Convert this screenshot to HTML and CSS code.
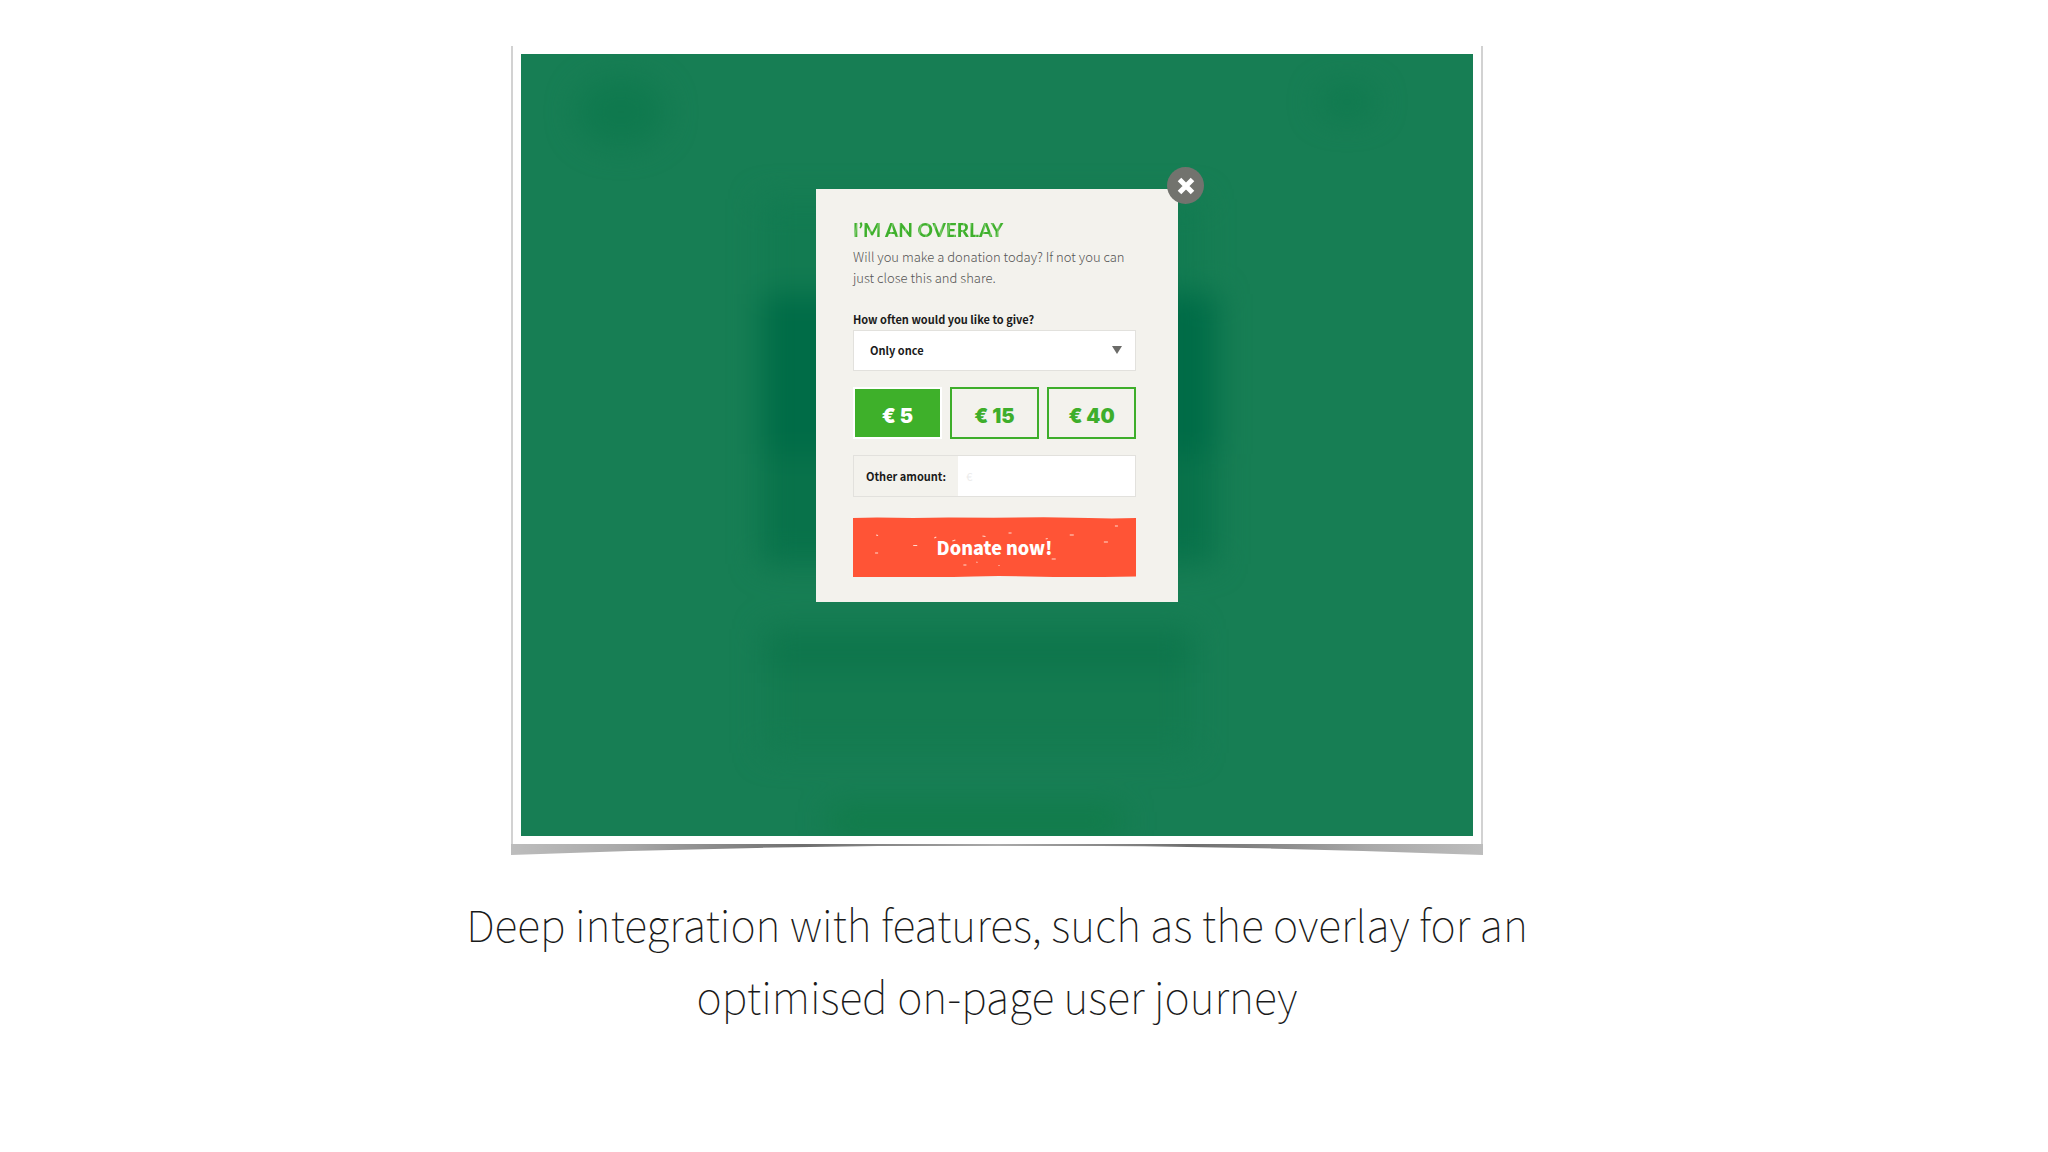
FILE: index.html
```
<!DOCTYPE html>
<html lang="en">
<head>
  <meta charset="UTF-8" />
  <meta name="viewport" content="width=device-width, initial-scale=1.0" />
  <title>Donation Overlay</title>
  <link rel="stylesheet" href="styles.css">
</head>
<body>
  <main class="slide">
    <figure class="figure">
      <div class="frame">
        <div class="stage">
          <!-- blurred page behind the overlay -->
          <svg class="backdrop" viewBox="0 0 952 782" preserveAspectRatio="none" aria-hidden="true">
            <defs>
              <filter id="soft" x="-30%" y="-30%" width="160%" height="160%" color-interpolation-filters="sRGB">
                <feGaussianBlur stdDeviation="15" />
              </filter>
            </defs>
            <g filter="url(#soft)">
              <ellipse cx="100" cy="58" rx="44" ry="34" fill="#0f794e" />
              <ellipse cx="826" cy="48" rx="28" ry="16" fill="#0f794e" />
              <rect x="240" y="145" width="440" height="110" fill="#127b51" />
              <rect x="240" y="240" width="456" height="160" fill="#006c47" />
              <rect x="240" y="400" width="454" height="110" fill="#08724a" />
              <rect x="244" y="575" width="428" height="44" fill="#0e764c" />
              <rect x="244" y="619" width="428" height="80" fill="#147b50" />
              <rect x="310" y="755" width="290" height="24" fill="#0f7b47" />
            </g>
          </svg>

          <section class="modal" aria-labelledby="modalTitle">
            <button class="close" type="button" aria-label="Close">
              <svg viewBox="0 0 18 18" aria-hidden="true">
                <path d="M2.500 2.500 15.500 15.500M15.500 2.500 2.500 15.500" />
              </svg>
            </button>

            <h1 id="modalTitle">I’M AN OVERLAY</h1>
            <p class="intro">Will you make a donation today? If not you can just close this and share.</p>

            <form class="form">
              <label class="field-label" for="frequency">How often would you like to give?</label>
              <div class="select-wrap">
                <select id="frequency">
                  <option>Only once</option>
                  <option>Monthly</option>
                </select>
                <svg class="arrow" viewBox="0 0 10 8" aria-hidden="true"><path d="M0 0h10L5 8z" /></svg>
              </div>

              <div class="amounts">
                <button class="amount active" type="button">€ 5</button>
                <button class="amount" type="button">€ 15</button>
                <button class="amount" type="button">€ 40</button>
              </div>

              <div class="other">
                <label for="other">Other amount:</label>
                <input type="text" id="other" placeholder="€" />
              </div>

              <button class="donate" type="submit">
                <svg class="paint" viewBox="0 0 282 60" preserveAspectRatio="none" aria-hidden="true">
                  <path class="fill" d="M0 1 24 .5 60 1 95 .5 140 .8 190 .3 235 1 258 1.500 282 1V59.500L250 60 200 60 145 59 120 59.500 100 60 0 60z" />
                  <path class="specks" d="M23 18l2 .5M60 28.500h4M22 36h3M81 21l2-1M99 24l3-1M129 19l3 .5M155 16h3M216 18h4M250 25h4M261 9h3M198 42h4M110 48h3M123 45l1 .5M145 48.500h1M192 22l2-.5" />
                </svg>
                <span>Donate now!</span>
              </button>
            </form>
          </section>
        </div>
      </div>

      <svg class="curl" viewBox="0 0 972 14" preserveAspectRatio="none" aria-hidden="true">
        <defs>
          <linearGradient id="curlFill">
            <stop offset="0" stop-color="#bdbdbd" />
            <stop offset=".12" stop-color="#a8a8a8" />
            <stop offset=".3" stop-color="#6e6e6e" />
            <stop offset=".5" stop-color="#aaa" />
            <stop offset=".7" stop-color="#6e6e6e" />
            <stop offset=".88" stop-color="#a8a8a8" />
            <stop offset="1" stop-color="#bdbdbd" />
          </linearGradient>
          <filter id="curlSoft" x="-1%" y="-20%" width="102%" height="150%">
            <feGaussianBlur stdDeviation=".7" />
          </filter>
        </defs>
        <path d="M0-3H972V11Q486-8 0 11z" fill="url(#curlFill)" filter="url(#curlSoft)" />
        <path d="M1 0H971V2H1z" fill="url(#curlFill)" />
      </svg>

      <figcaption class="caption">Deep integration with features, such as the overlay for an optimised on-page user journey</figcaption>
    </figure>
  </main>
</body>
</html>
```
FILE: styles.css
```
* {
  margin: 0;
  padding: 0;
  box-sizing: border-box;
}
body {
  background: #fff;
  color: #1a1a1a;
  font-family: "Noto Sans CJK SC", "Open Sans", sans-serif;
}
button, input, select {
  font: inherit;
  border: none;
}
.slide {
  min-height: 100vh;
  padding: 46px 54px 0 0;
}
.figure {
  display: flex;
  flex-direction: column;
  align-items: center;
}
.frame {
  width: 100%;
  max-width: 972px;
  padding: 8px;
  background: #fff;
  border: solid #d2d2d2;
  border-width: 0 2px;
}
.stage {
  position: relative;
  display: flex;
  justify-content: center;
  padding: 135px 20px 234px;
  background: #177e54;
  overflow: hidden;
}
.backdrop {
  position: absolute;
  inset: 0;
  width: 100%;
  height: 100%;
}

/* Modal */
.modal {
  position: relative;
  width: 100%;
  max-width: 362px;
  padding: 28px 42px 25px 37px;
  background: #f3f2ed;
}
.close {
  position: absolute;
  top: -22px;
  right: -26px;
  width: 37px;
  height: 37px;
  display: flex;
  align-items: center;
  justify-content: center;
  border-radius: 50%;
  background: #72736e;
  cursor: pointer;
}
.close svg {
  width: 18px;
  height: 18px;
  fill: none;
  stroke: #fff;
  stroke-width: 5;
}
h1 {
  font-family: Lato, sans-serif;
  font-size: 19px;
  line-height: 26px;
  font-weight: 900;
  color: transparent;
  background: repeating-linear-gradient(100deg, #3eb02c 0 4px, #7cca6c 5px, #3eb02c 7px);
  background-clip: text;
}
.intro {
  margin-top: 3px;
  font-size: 13px;
  line-height: 21px;
  font-weight: 300;
  color: #555;
}
.form {
  display: flex;
  flex-direction: column;
}
.field-label {
  margin-top: 21px;
  font-size: 11px;
  line-height: 20px;
  font-weight: 700;
}
.select-wrap {
  position: relative;
  margin-top: 1px;
}
select {
  width: 100%;
  height: 41px;
  padding: 0 16px 2px;
  appearance: none;
  background: #fff;
  border: 1px solid #e2e1dd;
  color: #1a1a1a;
  font-size: 11px;
  font-weight: 700;
}
.arrow {
  position: absolute;
  top: 16px;
  right: 14px;
  width: 10px;
  height: 8px;
  fill: #6b6b68;
  pointer-events: none;
}
.amounts {
  display: grid;
  grid-template-columns: repeat(3, 1fr);
  gap: 8px;
  margin-top: 16px;
}
.amount {
  height: 52px;
  padding-top: 6px;
  border: 2px solid #3eae2b;
  background: transparent;
  color: #3eae2b;
  font-family: Inter, sans-serif;
  font-size: 20px;
  font-weight: 900;
  cursor: pointer;
}
.amount.active {
  background: #3eb02a;
  border-color: #fff;
  color: #fff;
}
.other {
  display: flex;
  height: 42px;
  margin-top: 16px;
  border: 1px solid #e2e1dd;
}
.other label {
  padding: 0 12px;
  font-size: 11px;
  line-height: 40px;
  font-weight: 700;
}
.other input {
  flex: 1;
  min-width: 0;
  padding: 0 8px;
  background: #fff;
  font-size: 11px;
}
.other input::placeholder {
  color: #ececec;
}
.donate {
  position: relative;
  height: 60px;
  margin-top: 20px;
  background: none;
  color: #fff;
  font-size: 18px;
  font-weight: 900;
  cursor: pointer;
}
.donate span {
  position: relative;
}
.paint {
  position: absolute;
  inset: 0;
  width: 100%;
  height: 100%;
}
.paint .fill {
  fill: #ff5436;
}
.paint .specks {
  fill: none;
  stroke: #ffd9cc;
  stroke-width: 1;
}

.curl {
  width: 100%;
  max-width: 972px;
  height: 14px;
}
.caption {
  max-width: 1100px;
  margin-top: 29px;
  font-family: "Noto Sans CJK SC", Lato, sans-serif;
  font-size: 43px;
  line-height: 72px;
  font-weight: 100;
  text-align: center;
}
```
